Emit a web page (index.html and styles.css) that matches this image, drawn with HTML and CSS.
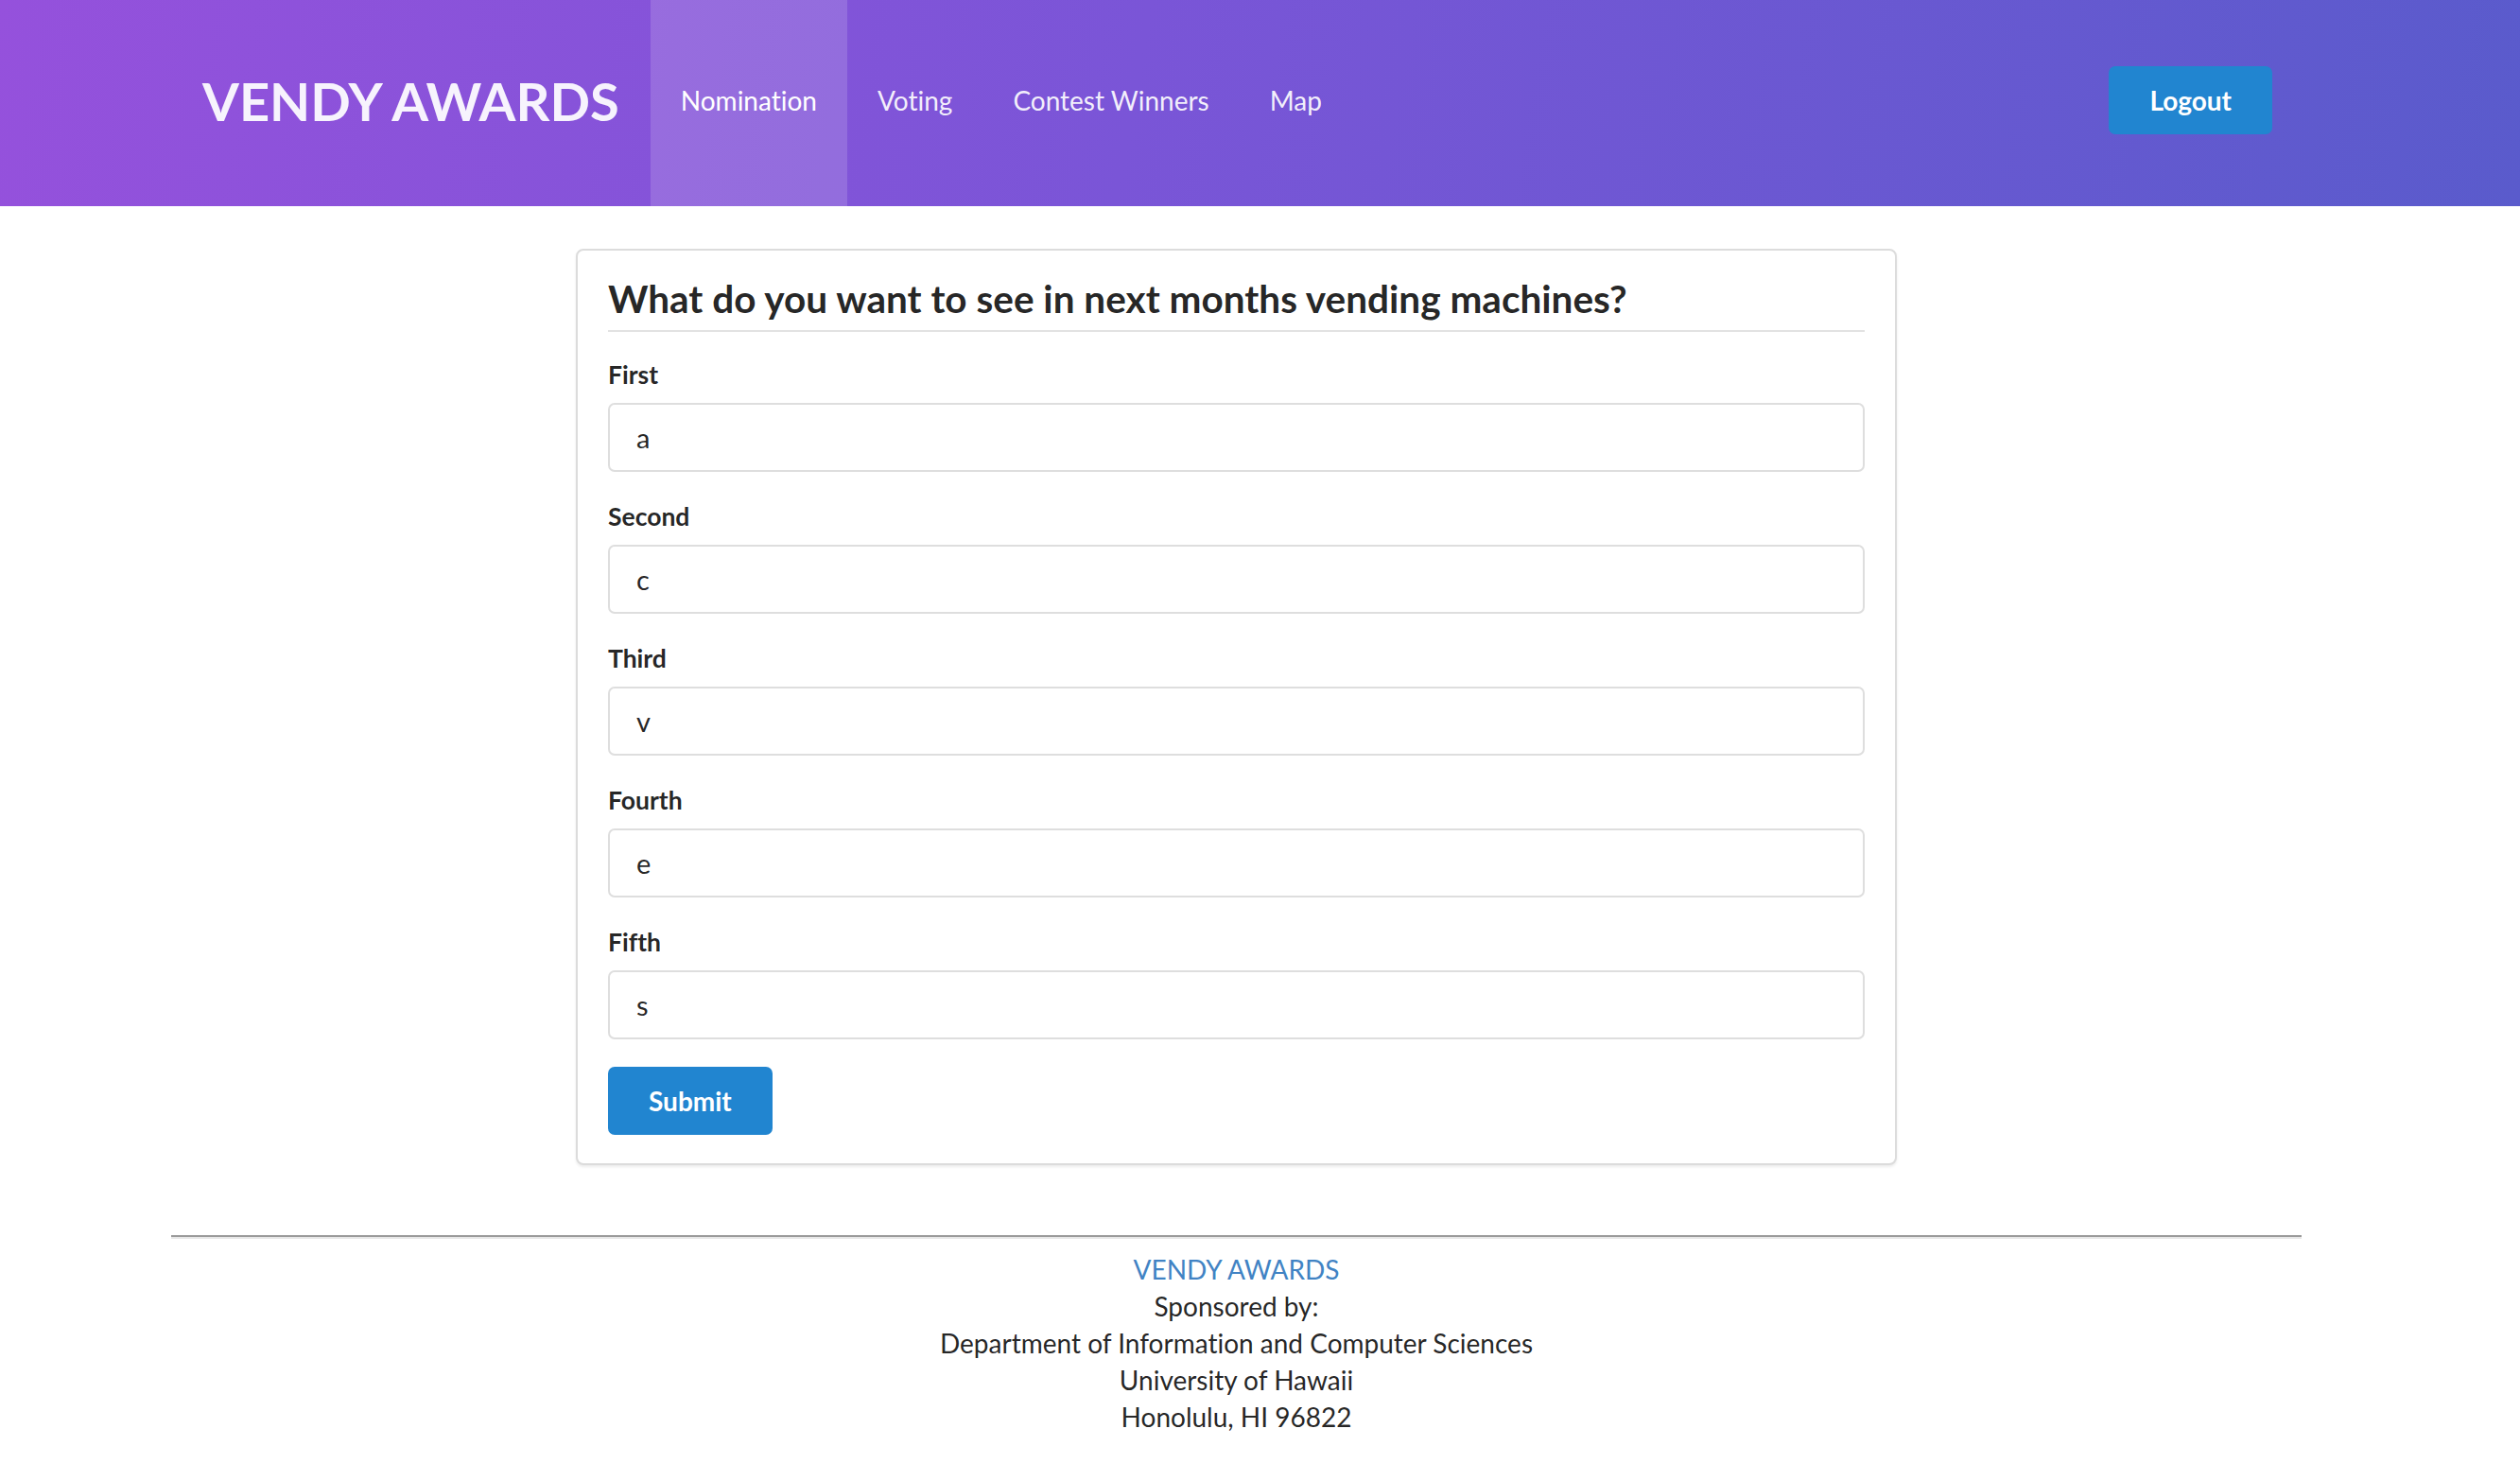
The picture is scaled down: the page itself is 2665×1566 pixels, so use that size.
FILE: index.html
```html
<!DOCTYPE html>
<html lang="en">
<head>
<meta charset="utf-8">
<title>Vendy Awards - Nomination</title>
<link rel="stylesheet" href="styles.css">
</head>
<body>
<header class="topbar">
  <div class="frame">
    <nav class="menu">
      <a class="brand" href="#">VENDY AWARDS</a>
      <a class="item active" href="#">Nomination</a>
      <a class="item" href="#">Voting</a>
      <a class="item" href="#">Contest Winners</a>
      <a class="item" href="#">Map</a>
      <div class="right">
        <button class="btn" type="button">Logout</button>
      </div>
    </nav>
  </div>
</header>

<div class="frame">
  <main class="card">
    <h2 class="title">What do you want to see in next months vending machines?</h2>
    <form class="form">
      <div class="field">
        <label>First</label>
        <input type="text" value="a">
      </div>
      <div class="field">
        <label>Second</label>
        <input type="text" value="c">
      </div>
      <div class="field">
        <label>Third</label>
        <input type="text" value="v">
      </div>
      <div class="field">
        <label>Fourth</label>
        <input type="text" value="e">
      </div>
      <div class="field last">
        <label>Fifth</label>
        <input type="text" value="s">
      </div>
      <button class="btn" type="button">Submit</button>
    </form>
  </main>

  <footer class="footer">
    <hr class="rule">
    <div class="footer-text">
      <a class="footer-link" href="#">VENDY AWARDS</a><br>
      Sponsored by:<br>
      Department of Information and Computer Sciences<br>
      University of Hawaii<br>
      Honolulu, HI 96822
    </div>
  </footer>
</div>
</body>
</html>
```

FILE: styles.css
```css
html, body {
  margin: 0;
  padding: 0;
  background: #ffffff;
}

body {
  font-family: Lato, "Open Sans", "Liberation Sans", sans-serif;
  font-variant-ligatures: no-common-ligatures;
  color: rgba(0, 0, 0, 0.87);
}

.frame {
  width: 2615px;
}

.topbar {
  background: linear-gradient(100deg, #9551dc 0%, #7a55d7 45%, #5a5bcc 100%);
  height: 218px;
}

.menu {
  width: 2253px;
  margin: 0 auto;
  height: 218px;
  box-sizing: border-box;
  padding-bottom: 6px;
  display: flex;
  align-items: stretch;
}

.brand {
  display: flex;
  align-items: center;
  padding: 0 33px 6px;
  margin-bottom: -6px;
  font-size: 56px;
  font-weight: 700;
  color: rgba(255, 255, 255, 0.93);
  text-decoration: none;
}

.item {
  display: flex;
  align-items: center;
  padding: 0 32px 6px;
  margin-bottom: -6px;
  font-size: 28px;
  color: rgba(255, 255, 255, 0.92);
  text-decoration: none;
}

.item.active {
  background: rgba(255, 255, 255, 0.15);
  color: #ffffff;
}

.right {
  margin-left: auto;
  margin-right: 31px;
  display: flex;
  align-items: center;
}

.btn {
  height: 72px;
  padding: 0 43px;
  border: none;
  border-radius: 7px;
  background: #2185d0;
  color: #ffffff;
  font-family: Lato, "Open Sans", "Liberation Sans", sans-serif;
  font-size: 28px;
  font-weight: 700;
  cursor: pointer;
}

.card {
  display: block;
  width: 1397px;
  box-sizing: border-box;
  margin: 45px auto 0;
  padding: 24px 32px 30px;
  border: 2px solid #dcdcdc;
  border-radius: 8px;
  box-shadow: 0 2px 3px rgba(0, 0, 0, 0.08);
  background: #ffffff;
}

.title {
  margin: 0 0 26px;
  font-size: 40.5px;
  line-height: 53px;
  font-weight: 700;
  color: rgba(0, 0, 0, 0.87);
  padding-bottom: 7px;
  border-bottom: 2px solid #e2e2e2;
}

.form {
  margin: 0;
}

.field {
  margin-bottom: 28px;
}

.field.last {
  margin-bottom: 29px;
}

.field label {
  display: block;
  font-size: 26.5px;
  line-height: 39px;
  font-weight: 700;
  color: rgba(0, 0, 0, 0.87);
  margin-bottom: 10px;
}

.field input {
  display: block;
  width: 100%;
  height: 73px;
  box-sizing: border-box;
  padding: 0 28px;
  border: 2px solid #dedede;
  border-radius: 7px;
  font-family: Lato, "Open Sans", "Liberation Sans", sans-serif;
  font-size: 29px;
  color: rgba(0, 0, 0, 0.87);
  background: #ffffff;
  outline: none;
}

.footer {
  width: 2253px;
  margin: 74px auto 0;
  padding-bottom: 40px;
}

.rule {
  margin: 0;
  height: 0;
  border: none;
  border-top: 2px solid #9a9a9a;
  border-bottom: 2px solid #e8e8e8;
}

.footer-text {
  margin-top: 13px;
  text-align: center;
  font-size: 28px;
  line-height: 39px;
  color: rgba(0, 0, 0, 0.87);
}

.footer-link {
  color: #4183c4;
  text-decoration: none;
}
```
